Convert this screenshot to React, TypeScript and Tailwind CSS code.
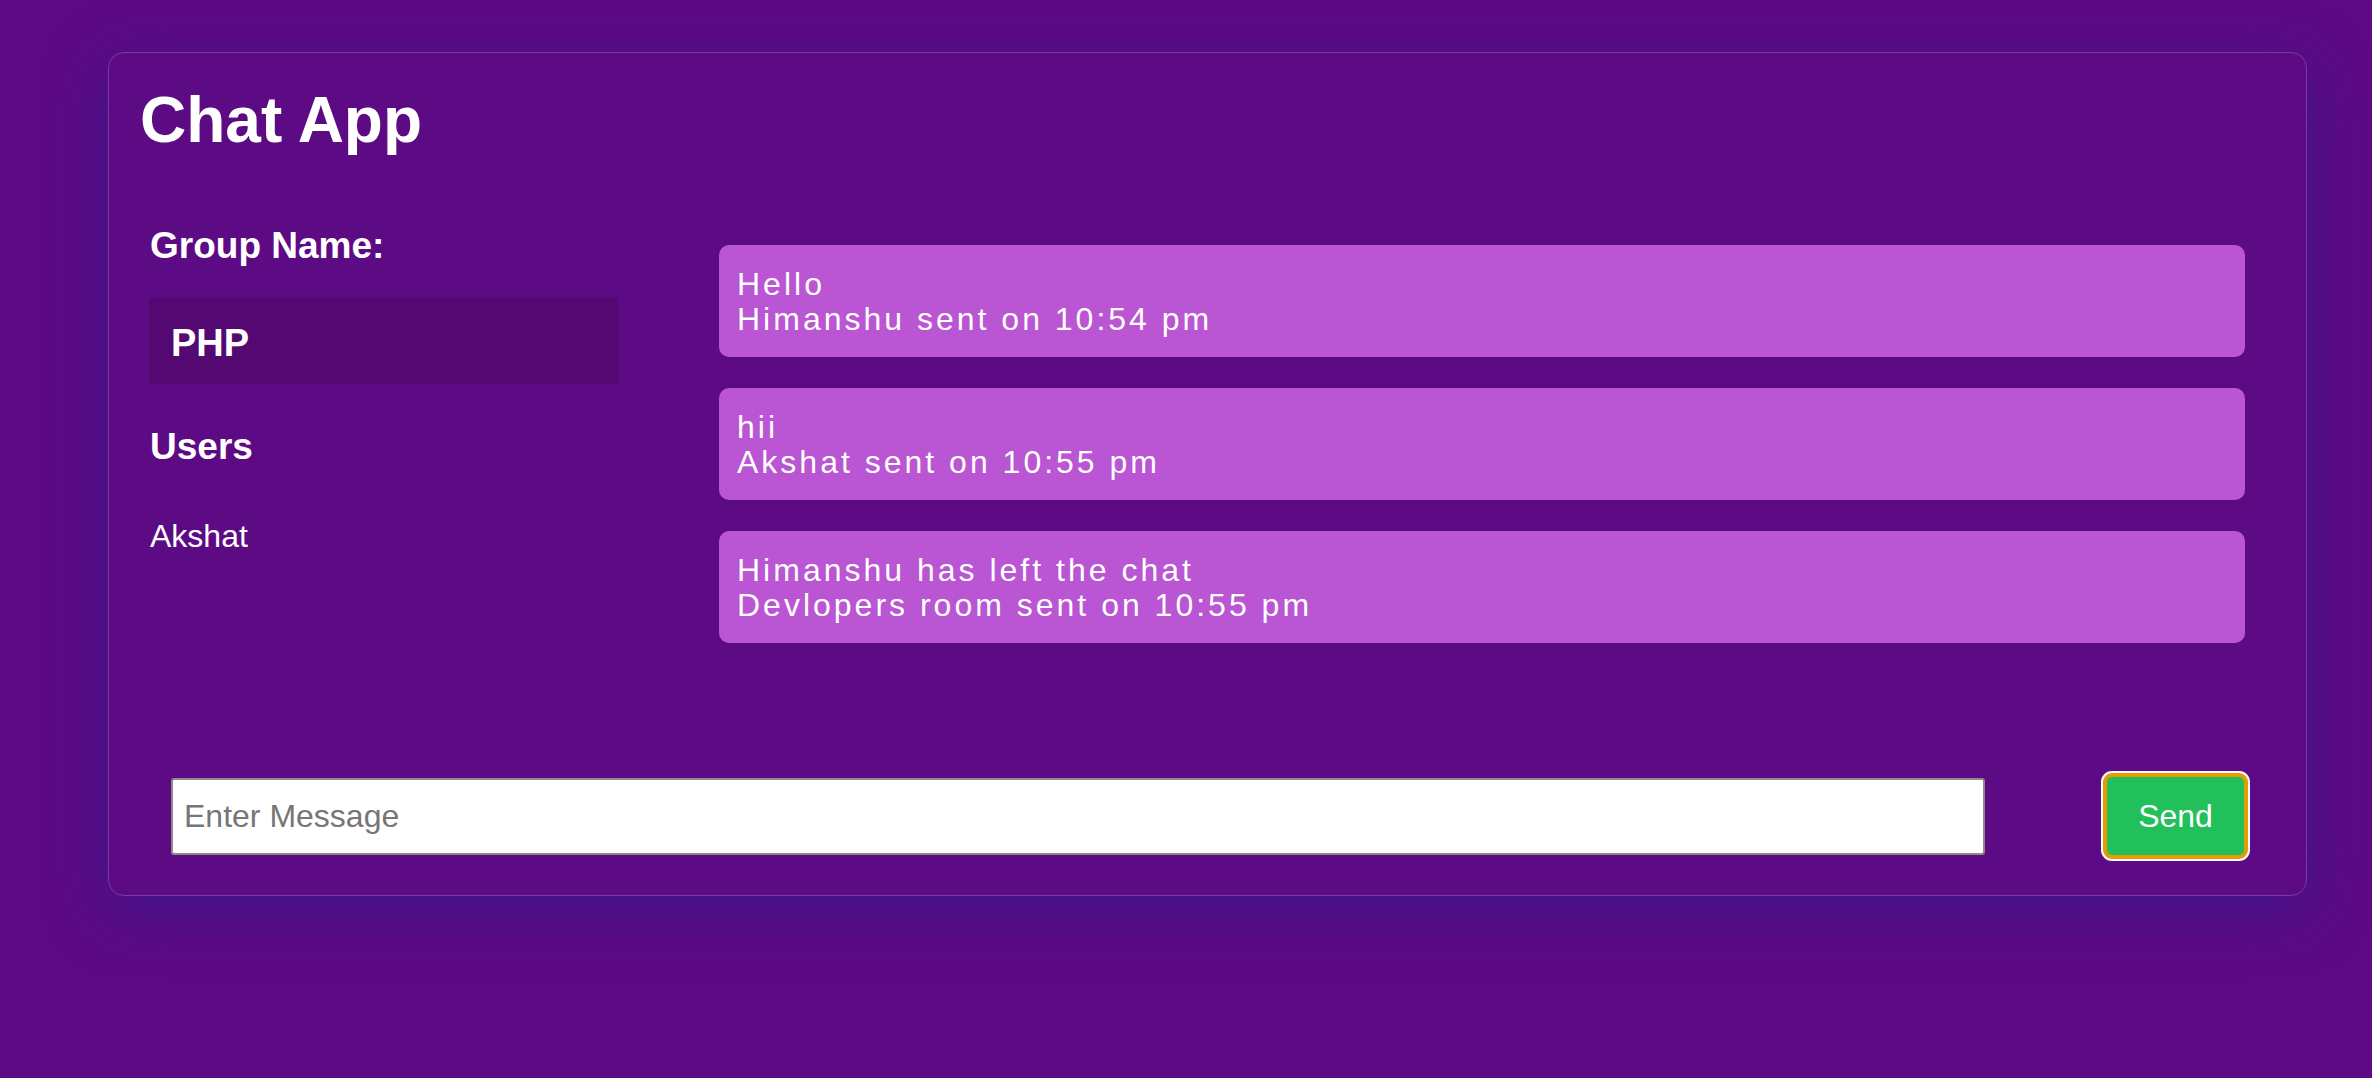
import React from "react";

const messages = [
  { text: "Hello", meta: "Himanshu sent on 10:54 pm" },
  { text: "hii", meta: "Akshat sent on 10:55 pm" },
  { text: "Himanshu has left the chat", meta: "Devlopers room sent on 10:55 pm" },
];

export default function App() {
  return (
    <div
      className="min-h-screen w-full bg-[#5d0b84] pt-[52px] text-white"
      style={{ fontFamily: '"Liberation Sans", Arial, sans-serif' }}
    >
      <div className="ml-[108px] flex h-[844px] w-[2199px] flex-col rounded-[16px] border border-[#7b3aa0] bg-[#5d0b84] shadow-[0_14px_60px_rgba(55,25,140,0.8)]">
        <h1 className="ml-[31px] mt-[30px] text-[64px] font-bold leading-[74px]">Chat App</h1>
        <div className="mt-[64px] flex h-[552px]">
          <div className="ml-[40px] flex w-[469px] flex-col pt-[3px]">
            <h3 className="pl-[1px] text-[37px] font-bold leading-[43px]">Group Name:</h3>
            <div className="mt-[31px] flex h-[86px] items-center bg-[#530872] pl-[22px] pt-[5px]">
              <h3 className="text-[38px] font-bold leading-[43px]">PHP</h3>
            </div>
            <h3 className="mt-[41px] pl-[1px] text-[37px] font-bold leading-[43px]">Users</h3>
            <div className="mt-[50px] pl-[1px] text-[32px] leading-[37px]">Akshat</div>
          </div>
          <div className="ml-[101px] mr-[61px] flex flex-1 flex-col gap-[31px] pt-[24px]">
            {messages.map((m, i) => (
              <div
                key={i}
                className="rounded-[10px] bg-[#ba55d3] pb-[20px] pl-[18px] pr-4 pt-[22px] text-[32px] leading-[35px] tracking-[3px]"
              >
                <div>{m.text}</div>
                <div>{m.meta}</div>
              </div>
            ))}
          </div>
        </div>
        <div className="flex items-center">
          <input
            type="text"
            placeholder="Enter Message"
            className="ml-[62px] h-[77px] w-[1814px] rounded-[3px] border-2 border-[#8a8a8a] bg-white px-[11px] text-[32px] text-black outline-none placeholder:text-[#767676]"
            style={{ fontFamily: '"Liberation Sans", Arial, sans-serif' }}
          />
          <button
            className="ml-[118px] flex h-[86px] w-[145px] items-center justify-center rounded-[9px] border-[4px] border-[#e69b00] bg-[#22c05a] text-[32px] text-white ring-2 ring-white"
            style={{ fontFamily: '"Liberation Sans", Arial, sans-serif' }}
          >
            Send
          </button>
        </div>
      </div>
    </div>
  );
}
